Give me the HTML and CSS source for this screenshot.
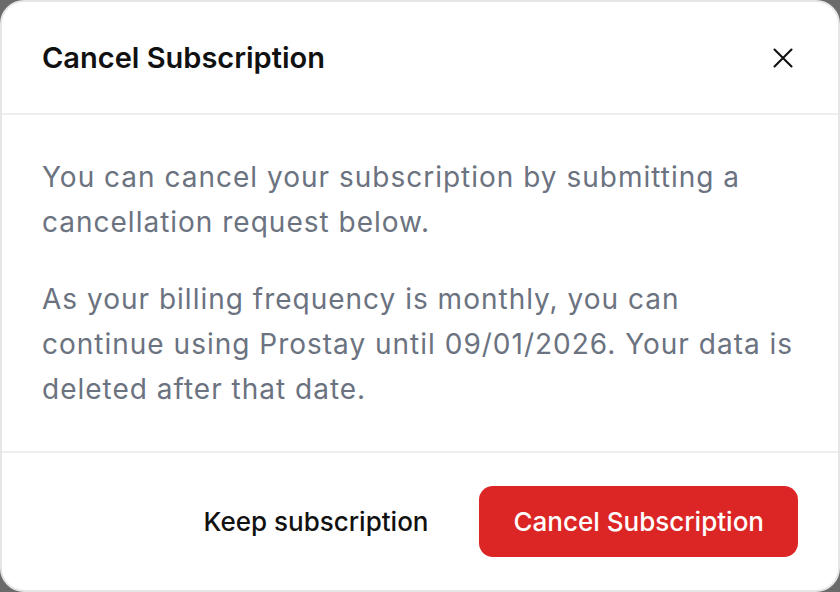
FILE: index.html
```html
<!DOCTYPE html>
<html>
<head>
<meta charset="utf-8">
<link rel="stylesheet" href="styles.css">
</head>
<body>
<div class="modal">
  <div class="modal-header">
    <h2 class="modal-title">Cancel Subscription</h2>
    <button class="close-btn" aria-label="Close">
      <svg width="20" height="20" viewBox="0 0 20 20" fill="none" stroke="#111" stroke-width="2.1" stroke-linecap="round">
        <path d="M1.5 1.5 L18.5 18.5 M18.5 1.5 L1.5 18.5"/>
      </svg>
    </button>
  </div>
  <div class="modal-body">
    <p>You can cancel your subscription by submitting a cancellation request below.</p>
    <p>As your billing frequency is monthly, you can continue using Prostay until 09/01/2026. Your data is deleted after that date.</p>
  </div>
  <div class="modal-footer">
    <button class="btn btn-ghost">Keep subscription</button>
    <button class="btn btn-danger">Cancel Subscription</button>
  </div>
</div>
</body>
</html>
```
FILE: styles.css
```css
html, body {
  margin: 0;
  padding: 0;
  height: 100%;
  background: #6b6b6b;
  font-family: Inter, "Noto Sans", sans-serif;
}
.modal {
  box-sizing: border-box;
  width: 840px;
  height: 592px;
  background: #ffffff;
  border: 2px solid #e6e6e6;
  border-radius: 24px;
  display: flex;
  flex-direction: column;
  overflow: hidden;
}
.modal-header {
  height: 113px;
  box-sizing: border-box;
  display: flex;
  align-items: center;
  justify-content: space-between;
  padding: 0 39px 0 40px;
  border-bottom: 2px solid #eeeeee;
}
.modal-title {
  margin: 0;
  font-size: 29px;
  font-weight: 600;
  color: #111111;
}
.close-btn {
  background: none;
  border: none;
  padding: 6px;
  display: flex;
  cursor: pointer;
}
.modal-body {
  flex: 1;
  padding: 40px 40px 0 40px;
  box-sizing: border-box;
  border-bottom: 2px solid #eeeeee;
}
.modal-body p {
  margin: 0 0 32px 0;
  font-size: 28px;
  line-height: 45px;
  color: #6b7280;
  letter-spacing: 1px;
}
.modal-footer {
  height: 137px;
  box-sizing: border-box;
  display: flex;
  align-items: center;
  justify-content: flex-end;
  gap: 17px;
  padding: 0 40px 0 0;
}
.btn {
  font-family: Inter, "Noto Sans", sans-serif;
  font-size: 26px;
  font-weight: 500;
  height: 71px;
  padding: 0 34px;
  border-radius: 14px;
  border: none;
  cursor: pointer;
}
.btn-ghost {
  background: transparent;
  color: #111111;
}
.btn-danger {
  background: #dc2626;
  color: #ffffff;
}
```
